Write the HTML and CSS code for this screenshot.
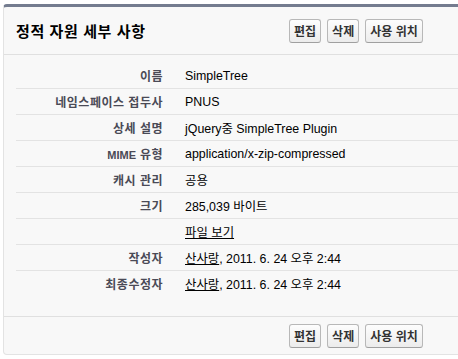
FILE: index.html
```html
<!DOCTYPE html>
<html lang="ko">
<head>
    <meta charset="UTF-8" />
    <title>정적 자원 세부 사항</title>
    <link rel="stylesheet" href="styles.css">
</head>
<body>
<div class="page">
    <div class="panel">
        <!-- 헤더 -->
        <div class="panel-head">
            <h2 class="panel-title">정적 자원 세부 사항</h2>
            <div class="btns">
                <button class="btn">편집</button>
                <button class="btn">삭제</button>
                <button class="btn">사용 위치</button>
            </div>
        </div>

        <!-- 상세 항목 -->
        <div class="panel-body">
            <div class="row"><div class="label">이름</div><div class="value">SimpleTree</div></div>
            <div class="row"><div class="label">네임스페이스 접두사</div><div class="value">PNUS</div></div>
            <div class="row"><div class="label">상세 설명</div><div class="value">jQuery중 SimpleTree Plugin</div></div>
            <div class="row"><div class="label"><span class="latin">MIME</span> 유형</div><div class="value">application/x-zip-compressed</div></div>
            <div class="row"><div class="label">캐시 관리</div><div class="value">공용</div></div>
            <div class="row"><div class="label">크기</div><div class="value">285,039 바이트</div></div>
            <div class="row"><div class="label"></div><div class="value"><a href="#">파일 보기</a></div></div>
            <div class="row"><div class="label">작성자</div><div class="value"><a href="#">산사랑</a>, 2011. 6. 24 오후 2:44</div></div>
            <div class="row"><div class="label">최종수정자</div><div class="value"><a href="#">산사랑</a>, 2011. 6. 24 오후 2:44</div></div>
        </div>

        <!-- 하단 버튼 -->
        <div class="panel-foot">
            <div class="spacer"></div>
            <div class="btns">
                <button class="btn">편집</button>
                <button class="btn">삭제</button>
                <button class="btn">사용 위치</button>
            </div>
        </div>
    </div>
</div>
</body>
</html>
```

FILE: styles.css
```css
/* -------------------- 기본 -------------------- */
html,body{margin:0;padding:0;overflow:hidden}
body{
    background:#fff;color:#000;
    font-family:'Liberation Sans',Arial,'Noto Sans CJK KR',sans-serif;
    font-size:12px;
}
.page{padding:4px 0 0 3px;width:455px;overflow:hidden}

/* -------------------- 패널 -------------------- */
.panel{
    width:480px;background:#f8f8f8;
    border:1px solid #e3e3e3;border-top:3px solid #747c8f;
    border-radius:4px;
}
.panel-head{
    display:flex;align-items:center;
    padding:12px 0 11px 12px;border-bottom:1px solid #e0e0e0;
}
.panel-title{
    margin:0;width:273px;
    font-family:'Noto Sans CJK KR',sans-serif;
    font-size:15px;font-weight:700;color:#000;line-height:24px;
    letter-spacing:.6px;
}
.btns{display:flex;gap:6px}
.btn{
    height:24px;padding:0 4px;margin:0;box-sizing:border-box;
    border:1px solid #b8b8b8;border-bottom-color:#a0a0a0;border-radius:3px;
    background:linear-gradient(#fdfdfd,#ececec);
    font-family:'Noto Sans CJK KR',sans-serif;font-size:12px;font-weight:700;
    color:#333;cursor:pointer;line-height:20px;
}

/* -------------------- 상세 항목 -------------------- */
.panel-body{padding:8px 0 20px 12px}
.row{
    display:flex;align-items:center;height:26px;box-sizing:border-box;
    border-bottom:1px solid #e3e3e3;
}
.row:last-child{border-bottom:none;height:25px}
.label{
    width:157px;box-sizing:border-box;padding-right:10px;flex:none;
    text-align:right;letter-spacing:.5px;
    font-family:'Noto Sans CJK KR',sans-serif;font-weight:700;color:#4a4a56;
}
.label .latin{font-family:'Liberation Sans',Arial,sans-serif;font-size:11px;letter-spacing:0}
.value{padding-left:12px;white-space:nowrap;font-size:12.4px}
.value a{color:#000;text-decoration:underline}

/* -------------------- 하단 -------------------- */
.panel-foot{
    display:flex;padding:7px 0 6px;border-top:1px solid #e0e0e0;
}
.spacer{width:285px;flex:none}
```
